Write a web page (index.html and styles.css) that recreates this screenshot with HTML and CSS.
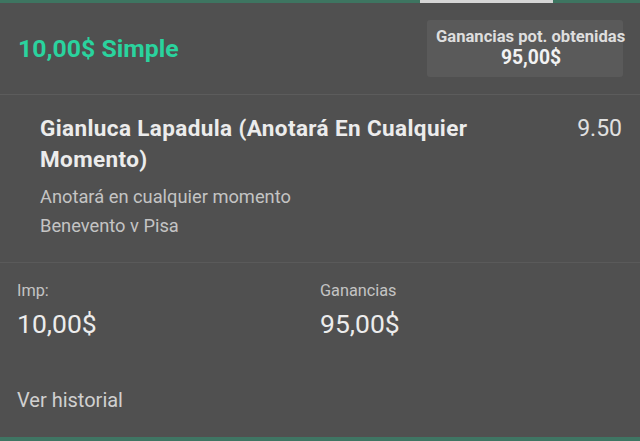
FILE: index.html
```html
<!DOCTYPE html>
<html lang="es">
<head>
<meta charset="utf-8">
<link rel="stylesheet" href="styles.css">
</head>
<body>
<div class="topbar"><div class="tab-indicator"></div></div>
<header class="bet-header">
  <div class="bet-title">10,00$ Simple</div>
  <div class="potential">
    <div class="potential-label">Ganancias pot. obtenidas</div>
    <div class="potential-value">95,00$</div>
  </div>
</header>
<section class="selection">
  <div class="sel-main">
    <div class="sel-name">Gianluca Lapadula (Anotará En Cualquier Momento)</div>
    <div class="sel-odds">9.50</div>
  </div>
  <div class="sel-market">Anotará en cualquier momento</div>
  <div class="sel-event">Benevento v Pisa</div>
</section>
<section class="summary">
  <div class="summary-col">
    <div class="summary-label">Imp:</div>
    <div class="summary-value">10,00$</div>
  </div>
  <div class="summary-col">
    <div class="summary-label">Ganancias</div>
    <div class="summary-value">95,00$</div>
  </div>
</section>
<div class="history">Ver historial</div>
<div class="bottombar"></div>
</body>
</html>
```
FILE: styles.css
```css
html, body {
  margin: 0;
  padding: 0;
}
body {
  width: 640px;
  height: 441px;
  overflow: hidden;
  background: #505050;
  font-family: Roboto, "Liberation Sans", sans-serif;
  color: #e6e6e6;
  display: flex;
  flex-direction: column;
}
.topbar {
  height: 3px;
  flex: none;
  background: #3e7561;
  display: flex;
  padding-left: 420px;
}
.tab-indicator {
  width: 133px;
  background: #d6d6d6;
}
.bet-header {
  display: flex;
  justify-content: space-between;
  align-items: flex-start;
  padding: 17px 17px 0 18px;
  height: 92px;
  box-sizing: border-box;
  flex: none;
  border-bottom: 1px solid #5c5c5c;
}
.bet-title {
  color: #2ad39e;
  font-weight: 700;
  font-size: 24.8px;
  line-height: 30px;
  margin-top: 13.5px;
}
.potential {
  background: #5a5a5a;
  border-radius: 3px;
  width: 196px;
  height: 57px;
  box-sizing: border-box;
  padding-top: 7px;
  padding-left: 12px;
  text-align: center;
  font-weight: 700;
  white-space: nowrap;
}
.potential-label {
  font-size: 16.6px;
  color: #dedede;
  line-height: 20px;
  margin-left: -3px;
}
.potential-value {
  font-size: 19.3px;
  color: #f2f2f2;
  line-height: 22px;
}
.selection {
  padding: 18px 18px 0 40px;
  height: 168px;
  box-sizing: border-box;
  flex: none;
  border-bottom: 1px solid #5a5a5a;
}
.sel-main {
  display: flex;
  justify-content: space-between;
  align-items: flex-start;
}
.sel-name {
  font-weight: 700;
  font-size: 22.5px;
  letter-spacing: 0.38px;
  line-height: 31px;
  color: #ececec;
  width: 470px;
}
.sel-odds {
  font-size: 23px;
  line-height: 31px;
  color: #e0e0e0;
}
.sel-market, .sel-event {
  font-size: 18.3px;
  color: #c4c4c4;
  line-height: 28.5px;
}
.sel-market {
  margin-top: 8px;
}
.summary {
  display: grid;
  grid-template-columns: 303px 1fr;
  padding: 18px 17px 0 17px;
  flex: none;
}
.summary-label {
  font-size: 16.3px;
  color: #c4c4c4;
  line-height: 20px;
}
.summary-value {
  font-size: 26.5px;
  color: #ececec;
  line-height: 32px;
  margin-top: 7px;
}
.history {
  padding: 47.5px 17px 0 17px;
  font-size: 20px;
  color: #d0d0d0;
  line-height: 24px;
  flex: 1;
}
.bottombar {
  height: 4px;
  flex: none;
  background: #3f7563;
}
```
